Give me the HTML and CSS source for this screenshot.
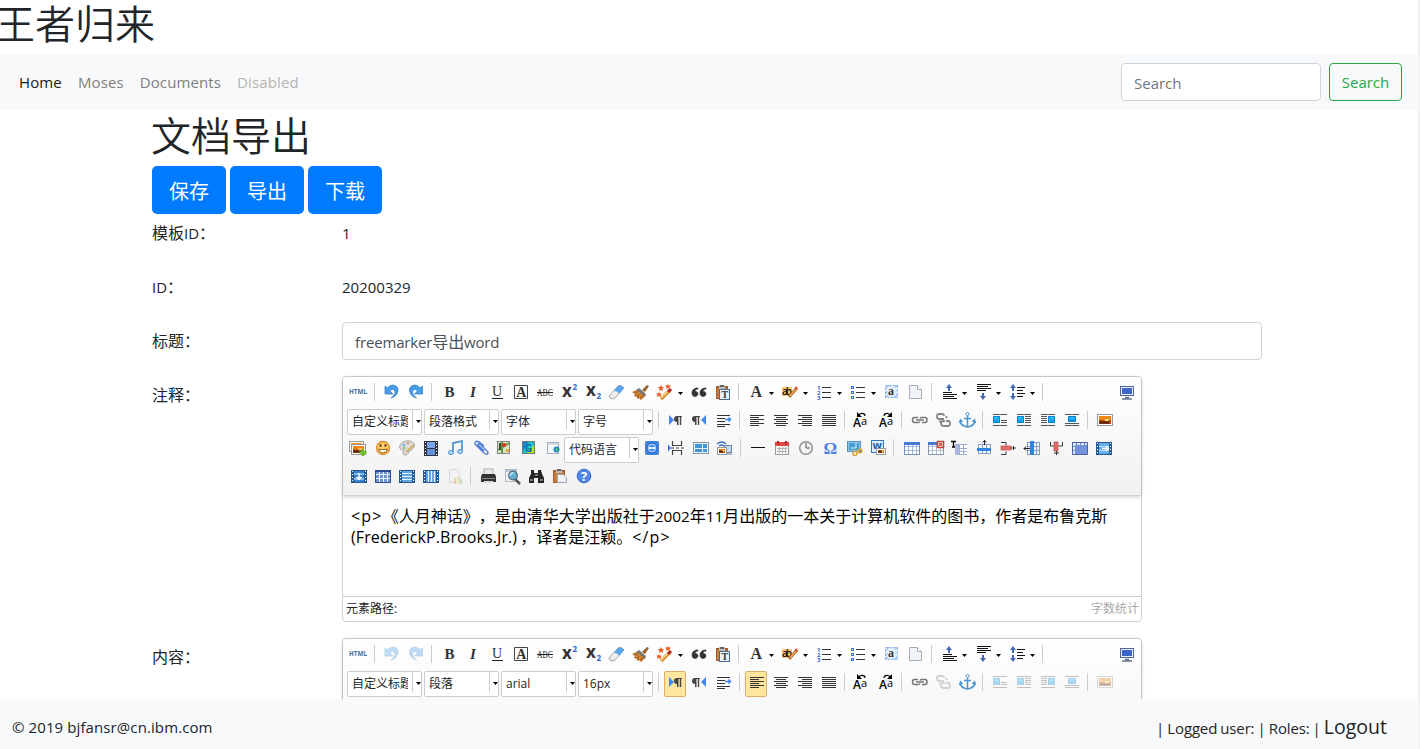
FILE: index.html
```html
<!DOCTYPE html>
<html lang="zh-CN">
<head>
<meta charset="utf-8">
<title>文档导出</title>
<link rel="stylesheet" href="styles.css">
</head>
<body>
<div class="page">
  <h1 class="brand">王者归来</h1>
  <nav class="navbar">
    <a class="nav-link active">Home</a>
    <a class="nav-link">Moses</a>
    <a class="nav-link">Documents</a>
    <a class="nav-link disabled">Disabled</a>
    <form class="search">
      <input class="control search-input" type="text" placeholder="Search">
      <button class="search-btn" type="button">Search</button>
    </form>
  </nav>
  <main class="container">
    <h1 class="title">文档导出</h1>
    <div class="actions">
      <button type="button">保存</button>
      <button type="button">导出</button>
      <button type="button">下载</button>
    </div>
    <div class="row"><label><b>模板</b>ID<b>：</b></label><div class="value">1</div></div>
    <div class="row"><label>ID<b>：</b></label><div class="value">20200329</div></div>
    <div class="row"><label><b>标题：</b></label><div class="control field">freemarker<b>导出</b>word</div></div>
    <div class="row tall"><label><b>注释：</b></label>
      <div class="editor">
        <div class="toolbar" data-editor="comment"></div>
        <div class="content"><span class="latin tag">&lt;p&gt;</span>《人月神话》，是由清华大学出版社于<span class="latin digits">2002</span>年<span class="latin digits">11</span>月出版的一本关于计算机软件的图书，作者是布鲁克斯<br><span class="latin name">(FrederickP.Brooks.Jr.)</span>，译者是汪颖。<span class="latin tag">&lt;/p&gt;</span></div>
        <div class="statusbar"><span>元素路径:</span><span class="count">字数统计</span></div>
      </div>
    </div>
    <div class="row tall"><label><b>内容：</b></label>
      <div class="editor">
        <div class="toolbar" data-editor="body"></div>
      </div>
    </div>
  </main>
  <footer class="footer">
    <span class="copyright">© 2019 bjfansr@cn.ibm.com</span>
    <span class="session">| Logged user: | Roles: | <a class="logout">Logout</a></span>
  </footer>
</div>
<script src="app.js"></script>
</body>
</html>
```
FILE: styles.css
```css
* { box-sizing: border-box; }
html, body { height: 100%; }
body {
  margin: 0;
  overflow: hidden;
  background: #f1f1f1;
  color: #212529;
  font-family: "Open Sans", "Noto Sans CJK SC", sans-serif;
  font-size: 15px;
  line-height: 24px;
}
button, input { font: inherit; }
b { font-weight: 400; font-size: 16px; line-height: 1; }
.page {
  width: 1418px;
  height: 749px;
  background: #fff;
  display: grid;
  grid-template-rows: 54px 56px minmax(0, 1fr) 50px;
}
h1 {
  margin: 0;
  font-family: "Noto Sans CJK SC DemiLight", "Noto Sans CJK SC", sans-serif;
  font-size: 40px;
  font-weight: 350;
  line-height: 48px;
}
.brand { margin: -2px 0 0 -5px; }
.navbar {
  display: flex;
  align-items: center;
  gap: 16px;
  padding: 0 16px 0 19px;
  background: #f8f9fa;
}
.nav-link { color: #7f8081; letter-spacing: 0.12px; }
.nav-link.active { color: #191919; }
.nav-link.disabled { color: #b4b5b5; }
.search { display: flex; gap: 8px; margin-left: auto; }
.control {
  height: 38px;
  padding: 7px 12px 5px;
  border: 1px solid #ced4da;
  border-radius: 4px;
  background: #fff;
  color: #495057;
}
.search-input { width: 200px; }
.search-input::placeholder { color: #6c757d; opacity: 1; }
.search-btn {
  width: 73px;
  height: 38px;
  padding: 0;
  border: 1px solid #28a745;
  border-radius: 4px;
  background: transparent;
  color: #28a745;
}
.container {
  width: 1140px;
  margin-left: 137px;
  padding: 0 15px;
  overflow: hidden;
}
.title { margin: 0 0 8px -1px; }
.actions { display: flex; gap: 4px; }
.actions button {
  width: 74px;
  height: 48px;
  padding: 3px 0 0;
  border: 0;
  border-radius: 5px;
  background: #007bff;
  color: #fff;
  font-size: 20px;
}
.row {
  display: grid;
  grid-template-columns: 190px 1fr;
  height: 38px;
  margin-bottom: 16px;
}
.row.tall { height: auto; }
.row label, .value { padding-top: 7px; line-height: 24px; }
.row .field { line-height: 24px; letter-spacing: -0.15px; }
.editor {
  width: 800px;
  border: 1px solid #d1d1d1;
  border-radius: 4px;
  background: #fff;
}
.toolbar {
  position: relative;
  height: 119px;
  padding: 4px 4px 2px;
  border-bottom: 1px solid #d1d1d1;
  border-radius: 4px 4px 0 0;
  background: linear-gradient(#fff, #f1f1f1);
  box-shadow: 0 1px 4px rgba(0, 0, 0, 0.2);
}
.tools { display: flex; height: 28px; align-items: flex-start; }
.tool {
  display: flex;
  width: 22px;
  height: 26px;
  margin-right: 2px;
  padding: 1px;
  border-radius: 2px;
}
.tool svg { flex: none; display: block; width: 20px; height: 20px; overflow: visible; }
.tool.menu { width: 32px; }
.tool.on { padding: 0; border: 1px solid #dcac6c; background: #ffe69f; }
.tool.off svg { opacity: 0.35; }
.tool.last { margin-left: auto; margin-right: -1px; }
.caret {
  width: 5px;
  height: 3px;
  margin: 10px 0 0 4px;
  background: #000;
  clip-path: polygon(0 0, 100% 0, 50% 100%);
}
.sep { width: 1px; height: 18px; margin: 2px 5px 0 3px; background: #ccc; }
.select {
  display: flex;
  width: 75px;
  height: 26px;
  margin-right: 2px;
  border: 1px solid #ccc;
  border-radius: 2px;
  background: #fff;
}
.select.inset { margin: 0 2px 0 1px; }
.select-label {
  width: 56px;
  margin-left: 4px;
  overflow: hidden;
  white-space: nowrap;
  font-size: 12px;
  line-height: 23px;
}
.select .caret { margin: 10px 0 0 3px; }
.select-rule { width: 1px; height: 20px; margin-left: 4px; background: #ccc; }
.content {
  height: 100px;
  padding: 9px 8px;
  color: #000;
  font-family: "Noto Sans CJK SC", sans-serif;
  font-size: 16px;
  line-height: 21px;
  white-space: nowrap;
  text-spacing-trim: space-all;
}
.latin { font-family: "Open Sans", sans-serif; font-size: 16px; line-height: 1; }
.digits { font-size: 15.3px; }
.tag { letter-spacing: 1.2px; }
.name { margin-right: 3px; letter-spacing: 0.1px; }
.statusbar {
  display: flex;
  justify-content: space-between;
  height: 25px;
  padding: 0 2px 0 3px;
  border-top: 1px solid #ccc;
  font-size: 12px;
  line-height: 23px;
}
.count { color: #aaa; }
.footer {
  position: relative;
  display: flex;
  justify-content: space-between;
  align-items: center;
  padding: 6px 31px 0 12px;
  background: #f8f9fa;
}
.copyright { letter-spacing: 0.1px; }
.session { letter-spacing: -0.15px; word-spacing: -0.6px; }
.logout { font-size: 19.5px; letter-spacing: 0; }
```
FILE: app.js
```js
// Icons are drawn on a 20x20 grid.
const r = (x, y, w, h, f, extra = '') => `<rect x="${x}" y="${y}" width="${w}" height="${h}" fill="${f}" ${extra}/>`;
const p = (d, s, w = 1, f = 'none') => `<path d="${d}" stroke="${s}" stroke-width="${w}" fill="${f}"/>`;
const t = (x, y, size, str, extra = '') => `<text x="${x}" y="${y}" font-size="${size}" ${extra}>${str}</text>`;
const serif = 'font-family="Liberation Serif" font-weight="bold" fill="#333"';
const sans = 'font-family="Open Sans" font-weight="bold" fill="#333"';
const lines = (list, c = '#333') => list.map(([x, y, w]) => r(x, y, w, 1, c)).join('');
const table = (bg, line, frame) => r(3, 4, 16, 13, bg) + p('M3 8.5h16M3 12.5h16M7.5 4v13M11.5 4v13M15.5 4v13', line) + p('M3.5 4.5h15v12h-15z', frame);
const film = (bg, inner) => r(3, 4, 16, 13, '#245a94') + r(6, 5, 10, 11, bg) +
  [5, 8, 11, 14].map(y => r(4, y, 1, 1, '#fff') + r(17, y, 1, 1, '#fff')).join('') + inner;
const arrowUp = (x, y) => p(`M${x} ${y + 6}V${y + 2}`, '#4468b8', 2) + `<path d="M${x - 3} ${y + 3}h6l-3-4z" fill="#4468b8"/>`;
const arrowDown = (x, y) => p(`M${x} ${y}v4`, '#4468b8', 2) + `<path d="M${x - 3} ${y + 3}h6l-3 4z" fill="#4468b8"/>`;
const pilcrow = x => `<path d="M${x + 8} 6h-5a3 3 0 0 0 0 6v3h1.5V7h1.3v8h1.4V7h.8z" fill="#444"/>`;
const photo = (x, y, w, h) => r(x, y, w, h, '#fff', 'stroke="#999"') + r(x + 1.5, y + 1.5, w - 3, h - 3, '#b84300') +
  r(x + 1.5, y + 1.5, w - 3, (h - 3) / 2, '#ee8812') + r(x + w / 2, y + h / 2 - 1, w / 4, 2, '#ffe070') + r(x + 1.5, y + h - 4, w - 5, 2, '#4d2516');
const block = (x, y, w, h) => r(x, y, w, h, '#149ce8') + r(x, y, w, h / 2, '#28b5f5') + p(`M${x + .5} ${y + .5}h${w - 1}v${h - 1}h-${w - 1}z`, '#0d82cd');
const undo = '<path d="M4 4v8h8l-3-3c1.500-2.500 5-2 5 1 0 2-1.500 4-4 6 4-1 7-4 7-8C17 3 10 1 6.500 6z" fill="#4a9ee8" stroke="#2878c0" stroke-width=".7"/>';
const rotate = dir => t(3, 17, 12, 'A', 'font-family="Open Sans" font-weight="600" fill="#000"') + t(11, 15, 11, 'a', 'font-family="Open Sans" fill="#000"') +
  (dir ? p('M8 6q0-3 4-2.500l3 1.500', '#000', 1.2) + '<path d="M16 2v5h-5z"/>' : p('M15 6q0-3-4-2.500L8 5', '#000', 1.2) + '<path d="M7 2v5h5z"/>');
const clipboard = r(4, 4, 12, 13, '#a85c28') + r(5, 6, 10, 10, '#c77b3d') + r(7, 3, 6, 4, '#bbb') + r(8, 3, 4, 2, '#666');

const icons = {
  html: t(1, 11.8, 7, 'HTML', 'font-family="Open Sans" font-weight="bold" fill="#3c70a0" textLength="18" lengthAdjust="spacingAndGlyphs"'),
  undo,
  redo: `<g transform="translate(21.5 0) scale(-1 1)">${undo}</g>`,
  bold: t(6.5, 15, 15, 'B', serif),
  italic: t(8, 15, 15, 'I', serif + ' font-style="italic"'),
  underline: t(6, 14, 14, 'U', serif.replace('bold', 'normal')) + r(6, 16, 11, 1, '#222'),
  border: p('M4.500 3.500h13v13h-13z', '#444') + t(6.2, 15, 14, 'A', serif),
  strike: t(3, 14, 11, 'ABC', serif.replace('bold', 'normal') + ' textLength="16" lengthAdjust="spacingAndGlyphs"') + r(3, 10, 16, 1, '#222'),
  sup: t(3, 15, 17, 'x', sans) + t(13.5, 8, 8, '2', sans.replace('#333', '#2864d0')),
  sub: t(3, 14, 17, 'x', sans) + t(13.5, 17, 8, '2', sans.replace('#333', '#2864d0')),
  eraser: '<path d="M3 14l9-10q2-1 4 0l2 2-9 10q-3 2-5 0z" fill="#eee" stroke="#8a9098" stroke-width=".8"/><path d="M8 9l4-5q2-1 4 0l2 2-5 6q-1-3-5-3z" fill="#5aa5ef"/>',
  broom: '<path d="M12 8l5-5 2 1-4 6z" fill="#9c622b"/><path d="M9 6l7 6-1 3-9-7z" fill="#777"/><path d="M7 8l8 6-4 4-2-2-2 1v-2l-3-1 1-2-3-2z" fill="#b96e28"/><path d="M6 13l4-3M9 15l3-3" stroke="#e1a456"/>',
  wand: p('M7 17L16 8', '#d58c28', 3.500) + p('M7 16L15 8', '#ffe0a0', 1.300) + p('M14 10l3-3', '#b62b24', 3) +
    '<path d="M7 3l1 2h2L8.500 7l.5 2-2-1-2 1 .5-2L4 5h2zM14 2l.7 1.500H17L15.500 5l.5 2-2-1-2 1 .5-2L11 3.500h2zM5 10l.7 1.500H8L6.500 13l.5 2-2-1-2 1 .5-2L2 11.500h2z" fill="#e95d20"/>',
  quote: '<path d="M10 6c-4 0-6 2-6 5 0 5 6 4 6 1 0-2-2-3-3-2 0-2 1-3 3-3zM18 6c-4 0-6 2-6 5 0 5 6 4 6 1 0-2-2-3-3-2 0-2 1-3 3-3z" fill="#333" stroke="#333" stroke-width=".7"/>',
  pasteText: clipboard + r(7.500, 7.500, 10, 10, '#eef5fb', 'stroke="#496b8d"') + t(9.5, 16, 10, 'T', serif),
  color: t(5.500, 14.500, 16, 'A', serif),
  mark: r(3, 5, 10, 9, '#ffc46b') + t(3, 13, 10, 'ab', 'font-family="Open Sans" font-weight="600" fill="#111" textLength="10"') + p('M10 15l8-9', '#b86d25', 3) + p('M11 14l6-7', '#ffdc88') + p('M16 7l2-2', '#e24c3d', 2),
  ol: t(3, 8, 6, '1', sans.replace('#333', '#2f66d0')) + t(3, 13, 6, '2', sans.replace('#333', '#2f66d0')) + t(3, 18, 6, '3', sans.replace('#333', '#2f66d0')) + lines([[8, 5, 9], [8, 10, 9], [8, 15, 9]]),
  ul: [4, 9, 14].map(y => r(3.500, y + .5, 2, 2, '#fff', 'stroke="#3b6bea"')).join('') + lines([[8, 5, 9], [8, 10, 9], [8, 15, 9]]),
  auto: r(4, 3, 13, 13, '#d7eaff') + p('M4 7l4-4M4 12l3-3M12 7l5-4M13 16l4-4M4 16l4-4', '#83b2ef') + r(4.5, 3.5, 12, 12, 'none', 'stroke="#86acdf" stroke-dasharray="2 2"') + r(6.5, 5.5, 8, 8, '#e8f3ff') + t(7, 13, 12, 'a', serif),
  page: '<path d="M4.500 3.500h8l4 4v9h-12z" fill="#f0f4f9" stroke="#a5adb7"/><path d="M12.500 3.500v4h4" fill="#fff" stroke="#a5adb7"/>',
  rowTop: arrowUp(10, 3) + lines([[4, 10, 9], [4, 12, 14], [4, 14, 11], [4, 16, 14]], '#111'),
  rowBottom: arrowDown(10, 11) + lines([[4, 2, 14], [4, 4, 11], [4, 6, 14], [4, 8, 9]], '#111'),
  lineHeight: arrowUp(6, 3) + arrowDown(6, 11) + lines([[10, 5, 8], [10, 8, 6], [10, 11, 8], [10, 14, 6]], '#111'),
  screen: r(3.500, 4.500, 13, 9, '#e8edff', 'stroke="#536695"') + r(5, 6, 10, 6, '#3e65cc') + p('M8 15.500h4M5 17h10', '#6a7694', 1.300),
  ltr: '<path d="M4 5l5 5-5 5z" fill="#4288e8"/>' + pilcrow(9),
  rtl: '<path d="M17 5l-5 5 5 5z" fill="#4288e8"/>' + pilcrow(3),
  indent: lines([[4, 5, 13], [4, 8, 8], [4, 11, 8], [4, 14, 13], [4, 16, 8]]) + p('M12 9.500h5M15.500 7.500l2 2-2 2', '#3d82ea', 1.500),
  left: lines([[4, 5, 14], [4, 7, 9], [4, 9, 14], [4, 11, 9], [4, 13, 14], [4, 15, 9]]),
  center: lines([[4, 5, 14], [6, 7, 10], [4, 9, 14], [6, 11, 10], [4, 13, 14], [6, 15, 10]]),
  right: lines([[4, 5, 14], [8, 7, 10], [4, 9, 14], [8, 11, 10], [4, 13, 14], [8, 15, 10]]),
  justify: lines([[4, 5, 14], [4, 7, 14], [4, 9, 14], [4, 11, 14], [4, 13, 14], [4, 15, 14]]),
  upper: `<g transform="translate(-2 0)">${rotate(0)}</g>`,
  lower: rotate(1),
  link: p('M9 7.500H5.500q-2 0-2 2.500t2 2.500H9q1.500 0 2-1M11 8.500q.5-1 2-1h3q2 0 2 2.500t-2 2.500h-3', '#777', 1.500) + p('M7 10h8', '#999', 2),
  unlink: p('M11 9H6Q4 9 4 6.500T6 4h3q2 0 2 2M11 12v-1q-3 0-3 2.500T11 16h4q2 0 2-2.500T15 11h-2M13 6l1 2M8 11l-2 1', '#888', 1.800),
  anchor: p('M10.500 6v11M7 8.500h7M3 11q1 5 7.500 6 6.500-1 7.500-6M2.500 13l1-3 2 2M18.500 13l-1-3-2 2', '#4c94d2', 1.500) + '<circle cx="10.500" cy="4" r="1.500" fill="#fff" stroke="#4c94d2"/>',
  floatNone: lines([[3, 4, 14], [11, 10, 6], [11, 12, 6], [3, 15, 14]], '#555') + block(3, 6, 7, 7),
  floatLeft: lines([[3, 4, 14], [11, 6, 6], [11, 8, 6], [11, 10, 6], [11, 12, 6], [3, 15, 14]], '#555') + block(3, 6, 7, 7),
  floatRight: lines([[3, 4, 14], [3, 6, 6], [3, 8, 6], [3, 10, 6], [3, 12, 6], [3, 15, 14]], '#555') + block(10, 6, 7, 7),
  floatCenter: lines([[3, 4, 14], [3, 13, 14], [3, 15, 14]], '#555') + block(6, 6, 8, 6),
  image: photo(3.500, 4.500, 15, 11),
  images: photo(1.500, 3.500, 14, 10) + photo(3.500, 6.500, 14, 10) + p('M15 11v7M11.500 14.500h7', '#6cbe25', 2.600),
  emoji: '<circle cx="10.500" cy="10" r="6.500" fill="#ffd568" stroke="#db8826" stroke-width="1.300"/><path d="M6 11q4.500 1.500 9 0-1 4-4.500 4T6 11z" fill="#fff" stroke="#9c5c19"/>' + r(7, 6, 2, 3, '#7b471c') + r(12, 6, 2, 3, '#7b471c'),
  scrawl: '<path d="M3 7q3-5 10-4 6 2 4 6-2 4-5 4-1 5-5 4-2-2 0-5-6 0-4-5z" fill="#dedbd5" stroke="#aaa"/><circle cx="7" cy="7" r="1.500" fill="#79b6e8"/><circle cx="11" cy="5" r="1.300" fill="#e89b72"/><circle cx="7" cy="10" r="1.300" fill="#8cc878"/>' + p('M9 14l8-7', '#d6a24d', 1.500),
  video: r(4, 3, 14, 15, '#30343e') + r(7, 4, 8, 6, '#7aa3e8') + r(7, 11, 8, 6, '#6590dc') + [4, 7, 10, 13, 16].map(y => r(5, y, 1, 1, '#fff') + r(16, y, 1, 1, '#fff')).join(''),
  music: p('M8 14V5l9-2v10', '#5294d2', 1.800) + '<ellipse cx="6" cy="14.500" rx="2.700" ry="2" fill="#a9d5f7" stroke="#5294d2"/><ellipse cx="15" cy="13.500" rx="2.500" ry="2" fill="#a9d5f7" stroke="#5294d2"/>',
  attach: p('M13 8L8 4Q4 2 4 6l9 9q4 3 4-1l-8-8q-2-1-2 1l6 6', '#5681d8', 1.500),
  map: r(3.500, 3.500, 12, 12, '#d5e6bd', 'stroke="#888"') + p('M4 12l11-7M8 4v11', '#5c9c48', 2) + r(5, 5, 2, 7, '#3a4a30') + '<circle cx="10" cy="7" r="2" fill="#e42b20"/>' + r(12, 11, 3, 3, '#e8aa40'),
  gmap: r(4.500, 3.500, 12, 12, '#1cc4cf', 'stroke="#777"') + '<path d="M5 4h6L5 13z" fill="#1485d0"/><path d="M16 7v8H9z" fill="#b7e51c"/>' + t(7, 14, 10, 'G', 'font-family="Open Sans" font-weight="bold" fill="#1468a8"'),
  frame: r(4.500, 4.500, 11, 11, '#f5f8fb', 'stroke="#a3adba"') + r(5, 5, 10, 2, '#d2dbe6') + '<circle cx="13.500" cy="11.500" r="3" fill="#168bc3"/><path d="M12 10l3 1-1 3z" fill="#71ca57"/>',
  app: r(3, 3, 14, 14, '#3f83df', 'rx="2"') + '<circle cx="10" cy="10" r="5" fill="#9bcfff" stroke="#1c55b5"/><circle cx="10" cy="10" r="3" fill="#4384df"/>' + r(7, 9, 6, 2, '#e6f4ff'),
  pagebreak: '<path d="M2 6.500l3 3.500-3 3.500z" fill="#3d6cc8"/>' + p('M6.500 3v4.500h9V3M6.500 17v-4.500h9V17M5 10h3M10 10h3M15 10h3', '#444', 1.200),
  template: r(3.500, 4.500, 15, 11, '#e5f4ff', 'stroke="#8796a5"') + r(5, 6, 7, 4, '#4596d6') + r(13, 6, 4, 4, '#4596d6') + r(5, 11, 7, 3, '#4596d6') + r(13, 11, 4, 3, '#4596d6'),
  remote: r(10.500, 7.500, 7, 7, '#c4d8f3', 'stroke="#6f85a8"') + p('M3 6q5-4 9 0M5 8q3-2 5 0', '#376cc3', 1.300) + photo(3.500, 9.500, 9, 7) + p('M13 16h5', '#778'),
  hr: r(3, 9, 14, 1, '#111'),
  date: r(3.500, 5.500, 13, 11, '#f6f6f6', 'stroke="#999"') + r(3, 4, 14, 4, '#df4745') + r(5, 3, 2, 3, '#a92d2d') + r(13, 3, 2, 3, '#a92d2d') + p('M5 10.500h10M5 13.500h10M7.500 9v6M10.500 9v6M13.500 9v6', '#b1b1b1'),
  time: '<circle cx="10" cy="10" r="6.300" fill="#f3f3f3" stroke="#8b8f94" stroke-width="1.500"/>' + p('M10 5v5h4', '#555'),
  special: t(3.500, 16, 17, 'Ω', 'font-family="Liberation Serif" font-weight="bold" fill="#4c7fe5"'),
  snap: r(3.500, 3.500, 13, 10, '#8fc5ee', 'stroke="#4e8fc4"') + r(5, 5, 10, 7, '#45a0cd') + p('M12 5v5H7', '#d9f3ff') + '<circle cx="11" cy="15.500" r="2" fill="none" stroke="#d5a33e" stroke-width="1.500"/><circle cx="16" cy="13" r="1.800" fill="none" stroke="#d5a33e" stroke-width="1.500"/>' + p('M12 14l5-4', '#d5a33e', 1.500),
  word: r(3.500, 2.500, 12, 12, '#dceeff', 'stroke="#3475bc"') + t(4.500, 11, 11, 'w', 'font-family="Open Sans" font-weight="bold" fill="#1d5eb1"') + photo(8.500, 10.500, 9, 6),
  table: table('#fff', '#a4b9dd', '#6e8cc2') + r(3, 4, 16, 3, '#477bd2'),
  tableDelete: table('#fff', '#b5c0d2', '#8093b3') + r(3, 4, 10, 3, '#477bd2') + r(12.5, 3.500, 6, 6, '#fff', 'stroke="#e53435" stroke-width="1.500"') + p('M14 5l3 3M17 5l-3 3', '#e53435', 1.300),
  tableHead: p('M1 3.500h5M3.500 3v6M2 9h3', '#000', 1.300) + r(5, 6, 12, 11, '#fff') + p('M5.500 6v11M5 6.500h12M5 10.500h12M5 13.500h12M9.500 6v11M13.500 6v11M5 16.500h12', '#9eadd0') + r(5, 7, 4, 10, '#a9b9df'),
  rowInsert: p('M4 6.500h12M4 15.500h12M4.500 6v10M8.500 6v10M12.500 6v10M16.500 6v10', '#829bca') + r(3, 10, 14, 3, '#2f83e3') + p('M10.500 2v5M8.500 4.500l2-2 2 2', '#222'),
  rowDelete: p('M4 4.500h5v3M4 16.500h5v-3', '#333') + r(4, 8, 10, 4, '#e46b67', 'stroke="#ae3a38" stroke-width=".6"') + p('M14 10h5M16.500 8v4', '#333'),
  colInsert: p('M6 4.500h13M6 8.500h13M6 12.500h13M6 16.500h13M15.500 4v13M18.500 4v13M6.500 4v13', '#829bca') + r(9, 3, 4, 14, '#2f83e3') + p('M3 10.500h6M5 8.500l-2 2 2 2', '#222'),
  colDelete: p('M4.500 4v4h4M16.500 4v4h-4', '#333') + r(8, 4, 4, 9, '#e46b67', 'stroke="#ae3a38" stroke-width=".6"') + p('M10.500 13v4M8 15h5', '#333'),
  merge: table('#dfe9fc', '#6f88c6', '#4963a4') + r(6, 7, 12, 9, '#7393dd'),
  mergeRight: film('#69aee9', p('M6 8.500h10M6 12.500h10', '#bfe1ff') + p('M9 10.500h6M13 8l2.500 2.500L13 13', '#fff', 1.500)),
  mergeDown: film('#3780c8', p('M6 8h10M6 13h10', '#dff0ff') + p('M11 7v6M8.500 11l2.500 2.500 2.500-2.500', '#fff', 1.500)),
  splitCells: table('#6f91d8', '#f1f5ff', '#294e91') + r(3, 4, 16, 2, '#294e91'),
  splitRows: film('#64a4df', p('M6 7.500h10M6 10.500h10M6 13.500h10', '#e8f6ff')),
  splitCols: film('#64a4df', p('M8.500 5v11M11.500 5v11M14.500 5v11', '#e8f6ff')),
  chart: '<path d="M5.500 3.500h7l3 3v10h-10z" fill="#f0f0f0" stroke="#aaa"/>' + r(10, 12, 2, 6, '#db8e4a') + r(13, 10, 2, 8, '#e8c54d') + r(16, 13, 2, 5, '#72ae4e'),
  print: r(6, 3, 9, 6, '#e8e8e8', 'stroke="#888" stroke-width=".6"') + '<path d="M4 8h13l1 3v5H3v-5z" fill="#333"/>' + r(4, 12, 13, 1, '#888') + r(6, 15, 9, 2, '#d9dee3'),
  preview: r(3.500, 3.500, 11, 12, '#f1f3f5', 'stroke="#b2b8c0"') + r(4, 4, 10, 2, '#bbc9da') + p('M13 13l5 5', '#555', 2.500) + '<circle cx="11" cy="9.500" r="4.300" fill="#62aed3" stroke="#4d6475" stroke-width="1.200"/>' + p('M8 10q1-4 4-3', '#d0f2ff', 1.300),
  find: '<path d="M5 4h3v3h4V4h3l1 4 2 4v5h-6v-5H8v5H3v-5l2-4z" fill="#252525"/>' + r(4, 13, 3, 2, '#777') + r(14, 13, 3, 2, '#777') + r(9, 8, 3, 2, '#777'),
  paste: clipboard + '<path d="M8.500 8.500h6l3 3v5h-9z" fill="#eef1f5" stroke="#9ea7b0"/>',
  help: '<circle cx="10" cy="10" r="6.800" fill="#5185e8" stroke="#3367c4"/>' + t(7, 15, 13, '?', 'font-family="Open Sans" font-weight="bold" fill="#fff"')
};

// Optical offsets for glyphs that sit right of the button's centre.
const nudge = {
  sup: 1, sub: 1, ol: 1, ul: 1, rowTop: 1, rowBottom: 1, lineHeight: 1, lower: 1, floatNone: 1, floatLeft: 1,
  floatRight: 1, floatCenter: 1, scrawl: 1, music: 1, attach: 3, map: 2, gmap: 2, frame: 3, emoji: .5, upper: 1,
  hr: 1, date: 1, time: 1, special: 1, snap: 1, word: 1, rowInsert: 2, rowDelete: 1, merge: 1, mergeRight: 1,
  tableHead: 2, tableDelete: 1, table: 1, colInsert: 1, colDelete: 2, help: 1, print: 1, preview: 1, find: 1, link: 1, unlink: 1, anchor: 1
};

// "|" is a separator, "v" marks a drop-down, "on" pressed, "off" disabled, "[..]" a select box.
const toolbars = {
  comment: [
    'html | undo redo | bold italic underline border strike sup sub eraser broom wand:v quote pasteText | color:v mark:v ol:v ul:v auto page | rowTop:v rowBottom:v lineHeight:v | screen:last',
    '[自定义标题] [段落格式] [字体] [字号] | ltr rtl indent | left center right justify | upper lower | link unlink anchor | floatNone floatLeft floatRight floatCenter | image',
    'images emoji scrawl video music attach map gmap frame [代码语言]+ app pagebreak template remote | hr date time special snap word | table tableDelete tableHead rowInsert rowDelete colInsert colDelete merge mergeRight',
    'mergeDown splitCells splitRows splitCols chart:off | print preview find paste help'
  ],
  body: [
    'html | undo:off redo:off | bold italic underline border strike sup sub eraser broom wand:v quote pasteText | color:v mark:v ol:v ul:v auto page | rowTop:v rowBottom:v lineHeight:v | screen:last',
    '[自定义标题] [段落] [arial] [16px] | ltr:on rtl indent | left:on center right justify | upper lower | link unlink:off anchor | floatNone:off floatLeft:off floatRight:off floatCenter:off | image:off'
  ]
};

const caret = '<i class="caret"></i>';
function draw(item) {
  if (item === '|') return '<span class="sep"></span>';
  if (item[0] === '[') {
    const label = item.slice(1, item.indexOf(']'));
    return `<span class="select${item.endsWith('+') ? ' inset' : ''}"><span class="select-label">${label}</span><i class="select-rule"></i>${caret}</span>`;
  }
  const [name, flag = ''] = item.split(':');
  const menu = flag === 'v';
  return `<span class="tool ${menu ? 'menu' : flag}"><svg viewBox="0 0 20 20"><g transform="translate(${nudge[name] || 0} 0)">${icons[name]}</g></svg>${menu ? caret : ''}</span>`;
}
document.querySelectorAll('.toolbar').forEach(bar => {
  bar.innerHTML = toolbars[bar.dataset.editor].map(row => `<div class="tools">${row.split(' ').map(draw).join('')}</div>`).join('');
});
```
